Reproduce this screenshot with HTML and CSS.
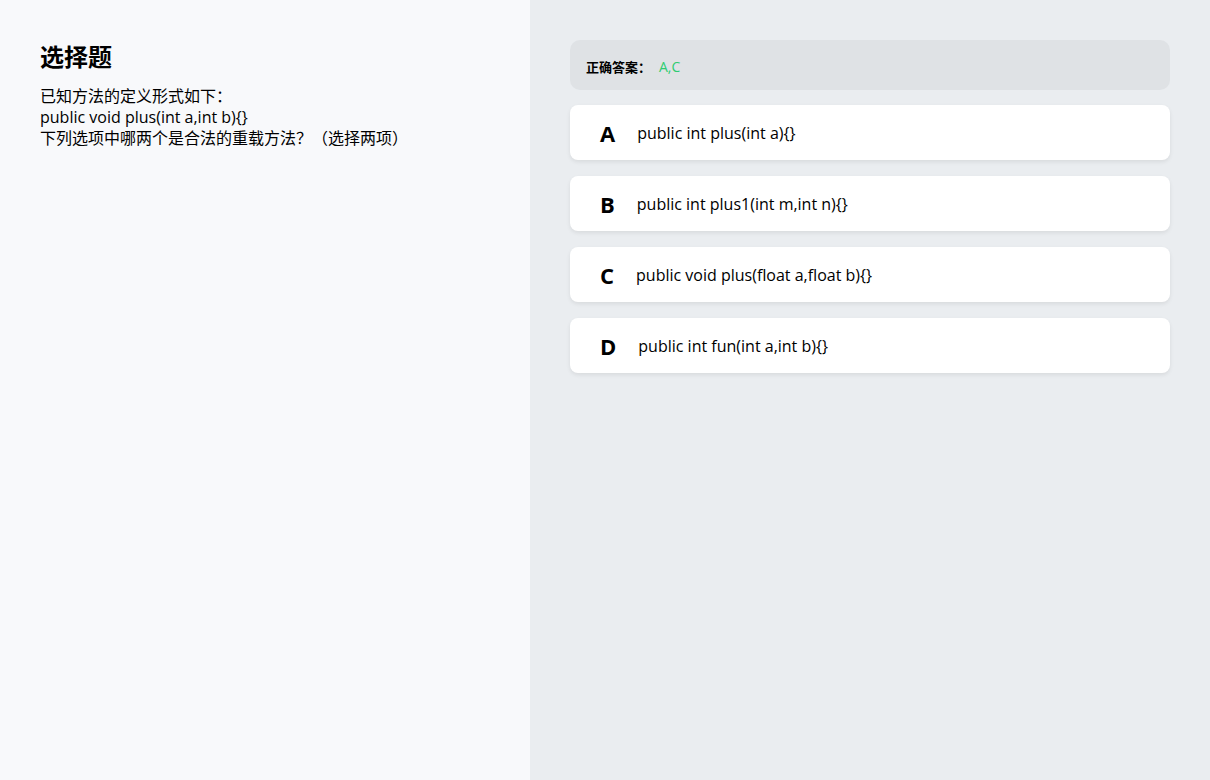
FILE: index.html
```html
<!DOCTYPE html>
<html lang="zh">
<head>
<meta charset="utf-8">
<link rel="stylesheet" href="styles.css">
</head>
<body>
<div class="page">
  <section class="question">
    <h1 class="title">选择题</h1>
    <div class="stem">
      <div>已知方法的定义形式如下：</div>
      <div>public void plus(int a,int b){}</div>
      <div>下列选项中哪两个是合法的重载方法？（选择两项）</div>
    </div>
  </section>
  <section class="answers">
    <div class="correct"><span class="label">正确答案：</span><span class="value">A,C</span></div>
    <div class="option"><span class="letter">A</span><span class="text">public int plus(int a){}</span></div>
    <div class="option"><span class="letter">B</span><span class="text">public int plus1(int m,int n){}</span></div>
    <div class="option"><span class="letter">C</span><span class="text">public void plus(float a,float b){}</span></div>
    <div class="option"><span class="letter">D</span><span class="text">public int fun(int a,int b){}</span></div>
  </section>
</div>
</body>
</html>
```
FILE: styles.css
```css
html, body {
  margin: 0;
  padding: 0;
  height: 100%;
}
body {
  font-family: "Open Sans", "Noto Sans CJK SC", sans-serif;
  color: #000;
}
.page {
  display: flex;
  height: 100%;
}
.question {
  width: 530px;
  flex: none;
  background: #f8f9fb;
  padding: 40px;
  box-sizing: border-box;
}
.title {
  margin: 0 0 12px;
  font-size: 24px;
  font-weight: 700;
  line-height: 34px;
}
.stem {
  font-size: 16px;
  line-height: 21px;
}
.answers {
  flex: 1;
  background: #eaedf0;
  padding: 40px;
  display: flex;
  flex-direction: column;
  gap: 16px;
}
.correct {
  height: 50px;
  box-sizing: border-box;
  background: #dfe2e5;
  border-radius: 10px;
  display: flex;
  align-items: center;
  padding: 2px 16px 0;
  margin-bottom: -1px;
}
.correct .label {
  font-size: 13px;
  font-weight: 700;
}
.correct .value {
  font-size: 14px;
  color: #2ecc71;
  margin-left: 8px;
}
.option {
  height: 55px;
  box-sizing: border-box;
  background: #fff;
  border-radius: 8px;
  box-shadow: 0 2px 4px rgba(0, 0, 0, 0.08);
  display: flex;
  align-items: center;
  padding: 0 30px;
}
.option .letter {
  font-size: 22px;
  font-weight: 700;
  margin-right: 22px;
}
.option .text {
  font-size: 16px;
}
```
